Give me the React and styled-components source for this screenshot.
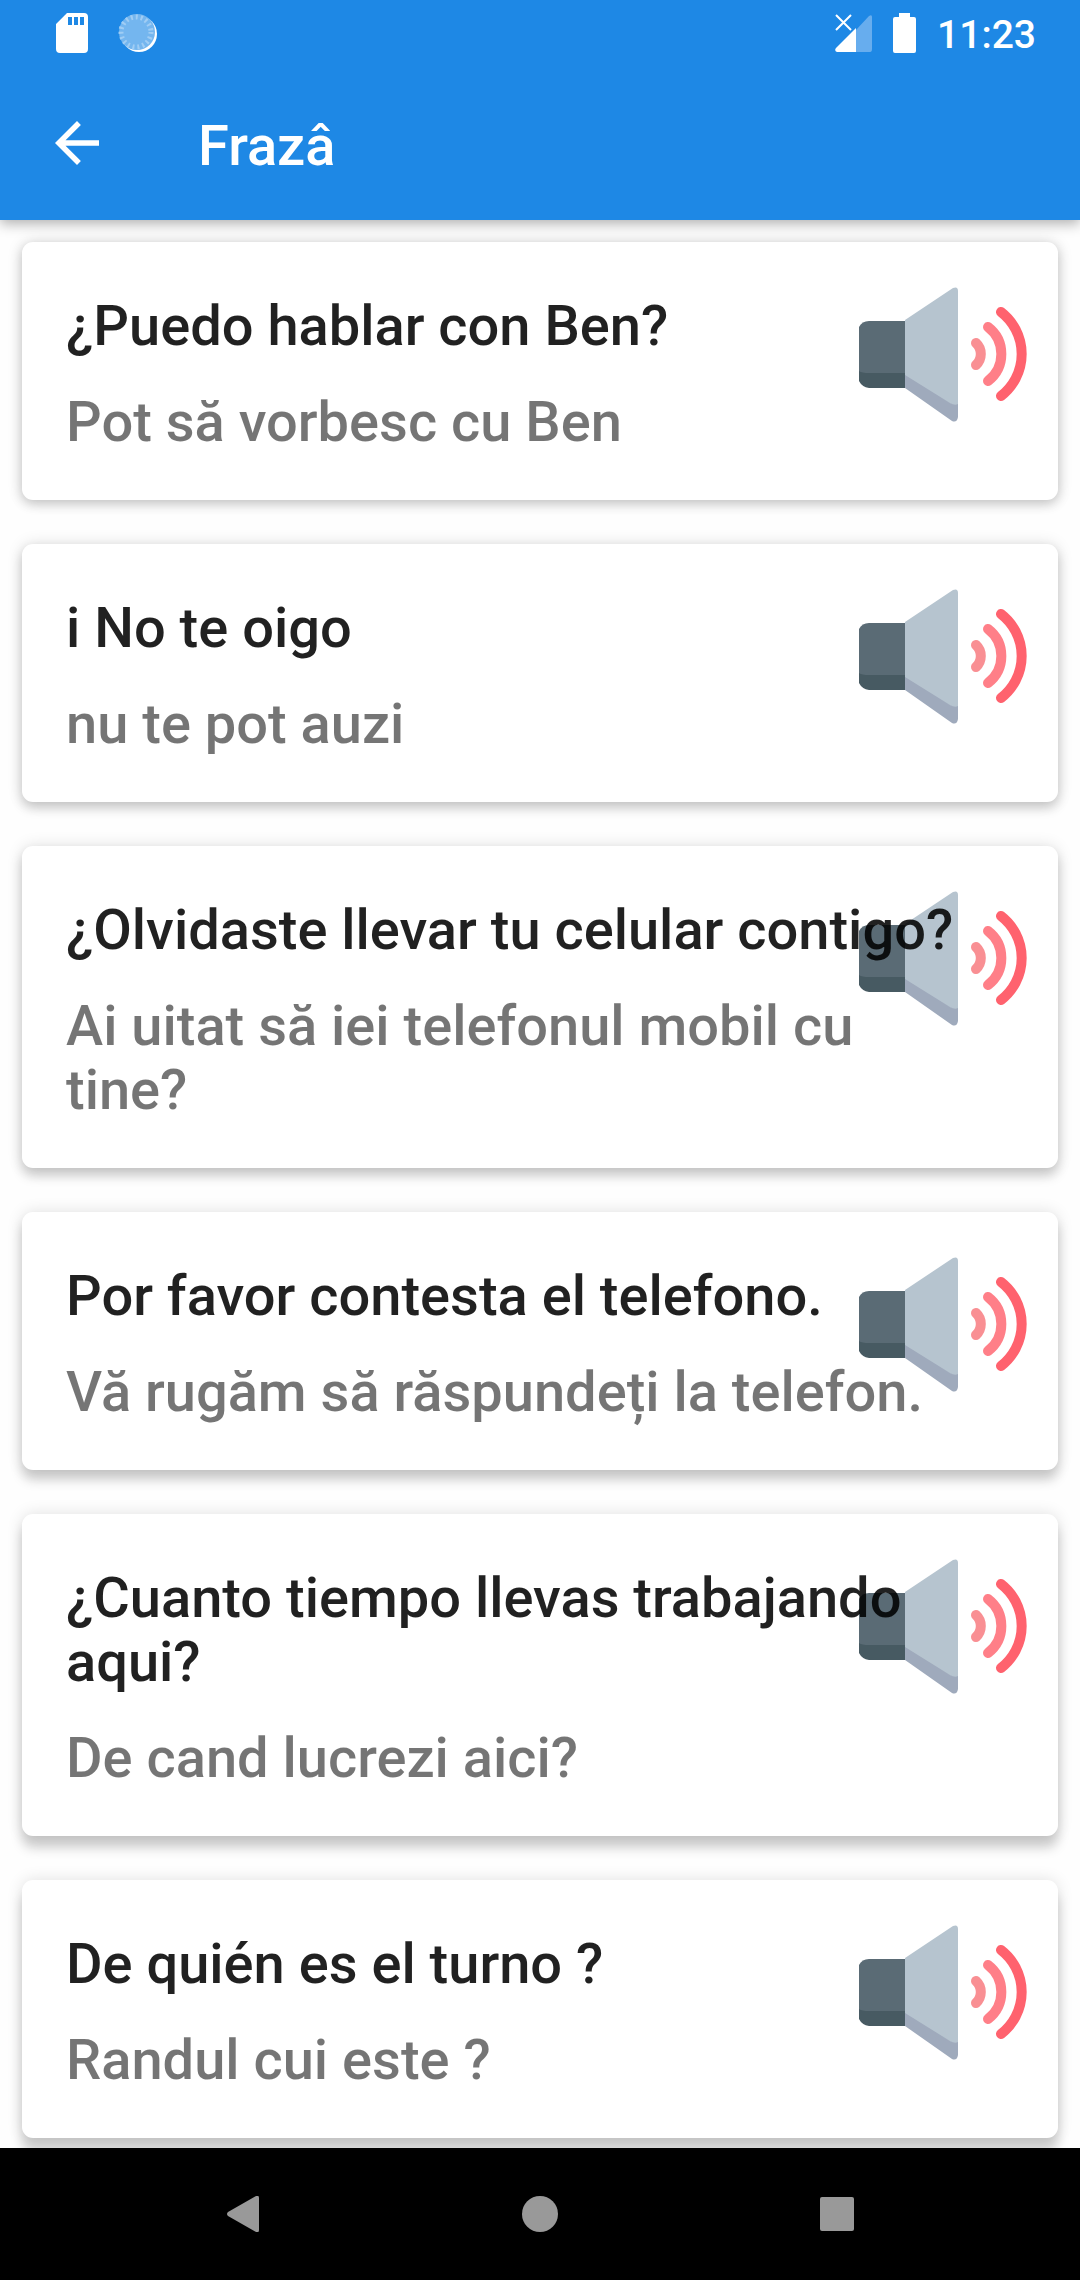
import React from 'react'
import styled, { createGlobalStyle } from 'styled-components'

const GlobalStyle = createGlobalStyle`
  * {
    box-sizing: border-box;
  }

  body {
    margin: 0;
    background-color: #fefefe;
    font-family: Roboto, "Noto Sans", sans-serif;
  }
`;

const Page = styled.div`
  display: flex;
  flex-direction: column;
  min-height: 100vh;
`;

const Header = styled.header`
  position: sticky;
  top: 0;
  z-index: 2;
  background-color: #1e88e5;
  color: white;
  box-shadow: 0 4px 12px rgba(0, 0, 0, .3);
`;

const StatusBar = styled.div`
  display: flex;
  align-items: center;
  justify-content: space-between;
  height: 66px;
  padding: 0 44px 0 52px;
`;

const StatusGroup = styled.div`
  display: flex;
  align-items: center;
  gap: ${props => props.$gap}px;
`;

const Clock = styled.time`
  padding-top: 4px;
  font-size: 39px;
  line-height: 44px;
  font-weight: 500;
`;

const AppBar = styled.div`
  display: flex;
  align-items: center;
  gap: 88px;
  height: 154px;
  padding: 0 44px;
`;

const IconButton = styled.button`
  display: flex;
  align-items: center;
  justify-content: center;
  padding: 0;
  border: none;
  background: none;
  color: inherit;
  cursor: pointer;
`;

const Title = styled.h1`
  margin: 0;
  padding-top: 6px;
  font-size: 56px;
  line-height: 64px;
  font-weight: 500;
`;

const List = styled.ul`
  flex: 1;
  display: flex;
  flex-direction: column;
  gap: 44px;
  margin: 0;
  padding: 22px 22px 10px;
  list-style: none;
`;

const Card = styled.li`
  position: relative;
  display: flex;
  flex-direction: column;
  gap: 32px;
  padding: 52px 88px 46px 44px;
  border-radius: 11px;
  background-color: white;
  box-shadow: 0 ${props => props.$drop}px 12px rgba(0, 0, 0, .18), 0 0 16px rgba(0, 0, 0, .12);
`;

const Phrase = styled.p`
  position: relative;
  z-index: 1;
  margin: 0;
  font-size: 56px;
  line-height: 64px;
  font-weight: 500;
  color: rgba(0, 0, 0, ${props => props.$muted ? .54 : .87});
  pointer-events: none;
`;

const PlayButton = styled(IconButton)`
  position: absolute;
  top: 28px;
  right: 31px;
`;

const NavBar = styled.nav`
  position: sticky;
  bottom: 0;
  z-index: 2;
  display: flex;
  height: 132px;
  padding: 0 94px;
  background-color: black;
  color: #999;
`;

const NavButton = styled(IconButton)`
  flex: 1;
`;

const SdCardIcon = () => (
  <svg width="40" height="40" viewBox="0 0 40 40">
    <path fill="white" fillRule="evenodd" d="M15 0H32Q36 0 36 4V36Q36 40 32 40H8Q4 40 4 36V11ZM16 4V12H20V4ZM22 4V12H26V4ZM28 4V12H32V4Z" />
  </svg>
)

const SyncIcon = () => (
  <svg width="40" height="40" viewBox="0 0 40 40">
    <circle cx="21" cy="21" r="18" fill="white" />
    <circle cx="19" cy="19" r="18" fill="#74b6ef" />
    <circle cx="18" cy="19" r="15" fill="none" stroke="#a0cdf4" strokeWidth="5" strokeDasharray="2 3" />
  </svg>
)

const SignalIcon = () => (
  <svg width="38" height="40" viewBox="0 0 38 40">
    <path fill="#67adee" d="M21 17L34 3Q37 1 37 4V36Q37 39 35 39H21Z" />
    <path fill="white" d="M21 15V39H2Q-1 38 1 35Z" />
    <path stroke="white" strokeWidth="2" d="M1 2L16 17M16 2L1 17" />
  </svg>
)

const BatteryIcon = () => (
  <svg width="24" height="40" viewBox="0 0 24 40">
    <path fill="white" d="M6 0H17V4H21Q23 4 23 6V38Q23 40 21 40H2Q0 40 0 38V6Q0 4 2 4H6Z" />
  </svg>
)

const BackIcon = () => (
  <svg width="66" height="66" viewBox="0 0 24 24" fill="currentColor">
    <path d="M20 11H7.83l5.59-5.59L12 4l-8 8 8 8 1.41-1.41L7.83 13H20v-2z" />
  </svg>
)

const SpeakerIcon = () => (
  <svg width="168" height="168" viewBox="0 0 168 168">
    <path fill="#5a6b75" d="M10 51H46V106H0V57Q3 51 10 51Z" />
    <path fill="#475a62" d="M0 101Q3 103 10 103H46V118H10Q3 117 0 111Z" />
    <path fill="#b6c4cf" d="M46 50L94 18Q99 16 99 21V138L46 108Z" />
    <path fill="#9faabc" d="M46 105L91 133Q96 136 99 134V147Q98 153 93 151L46 118Z" />
    <g fill="none" strokeWidth="10" strokeLinecap="round">
      <path stroke="#f98f93" d="M117 73A15 15 0 0 1 117 95" />
      <path stroke="#ff7f88" d="M129 57A34 34 0 0 1 129 111" />
      <path stroke="#ff626e" d="M142 42A53 53 0 0 1 142 126" />
    </g>
  </svg>
)

const phrases = [
  { text: '¿Puedo hablar con Ben?', translation: 'Pot să vorbesc cu Ben' },
  { text: 'i No te oigo', translation: 'nu te pot auzi' },
  { text: '¿Olvidaste llevar tu celular contigo?', translation: 'Ai uitat să iei telefonul mobil cu tine?' },
  { text: 'Por favor contesta el telefono.', translation: 'Vă rugăm să răspundeți la telefon.' },
  { text: '¿Cuanto tiempo llevas trabajando aqui?', translation: 'De cand lucrezi aici?' },
  { text: 'De quién es el turno ?', translation: 'Randul cui este ?' },
]

const App = () => {
  return (
    <>
      <GlobalStyle />
      <Page>
        <Header>
          <StatusBar>
            <StatusGroup $gap={26}>
              <SdCardIcon />
              <SyncIcon />
            </StatusGroup>
            <StatusGroup $gap={20}>
              <SignalIcon />
              <BatteryIcon />
              <Clock>11:23</Clock>
            </StatusGroup>
          </StatusBar>
          <AppBar>
            <IconButton type="button" aria-label="Back">
              <BackIcon />
            </IconButton>
            <Title>Frazâ</Title>
          </AppBar>
        </Header>
        <List>
          {phrases.map((phrase, index) => (
            <Card key={phrase.text} $drop={4 + index * 2}>
              <Phrase lang="es">{phrase.text}</Phrase>
              <Phrase lang="ro" $muted>{phrase.translation}</Phrase>
              <PlayButton type="button" aria-label={`Play ${phrase.text}`}>
                <SpeakerIcon />
              </PlayButton>
            </Card>
          ))}
        </List>
        <NavBar>
          <NavButton type="button" aria-label="System back">
            <svg width="36" height="36" viewBox="0 0 36 36" fill="currentColor">
              <path d="M31 0Q34 -1 34 2V34Q34 37 31 36L3 20Q1 18 3 16Z" />
            </svg>
          </NavButton>
          <NavButton type="button" aria-label="Home">
            <svg width="36" height="36" viewBox="0 0 36 36" fill="currentColor">
              <circle cx="18" cy="18" r="18" />
            </svg>
          </NavButton>
          <NavButton type="button" aria-label="Recent apps">
            <svg width="36" height="36" viewBox="0 0 36 36" fill="currentColor">
              <rect x="1" y="1" width="34" height="34" rx="2" />
            </svg>
          </NavButton>
        </NavBar>
      </Page>
    </>
  )
}

export default App
